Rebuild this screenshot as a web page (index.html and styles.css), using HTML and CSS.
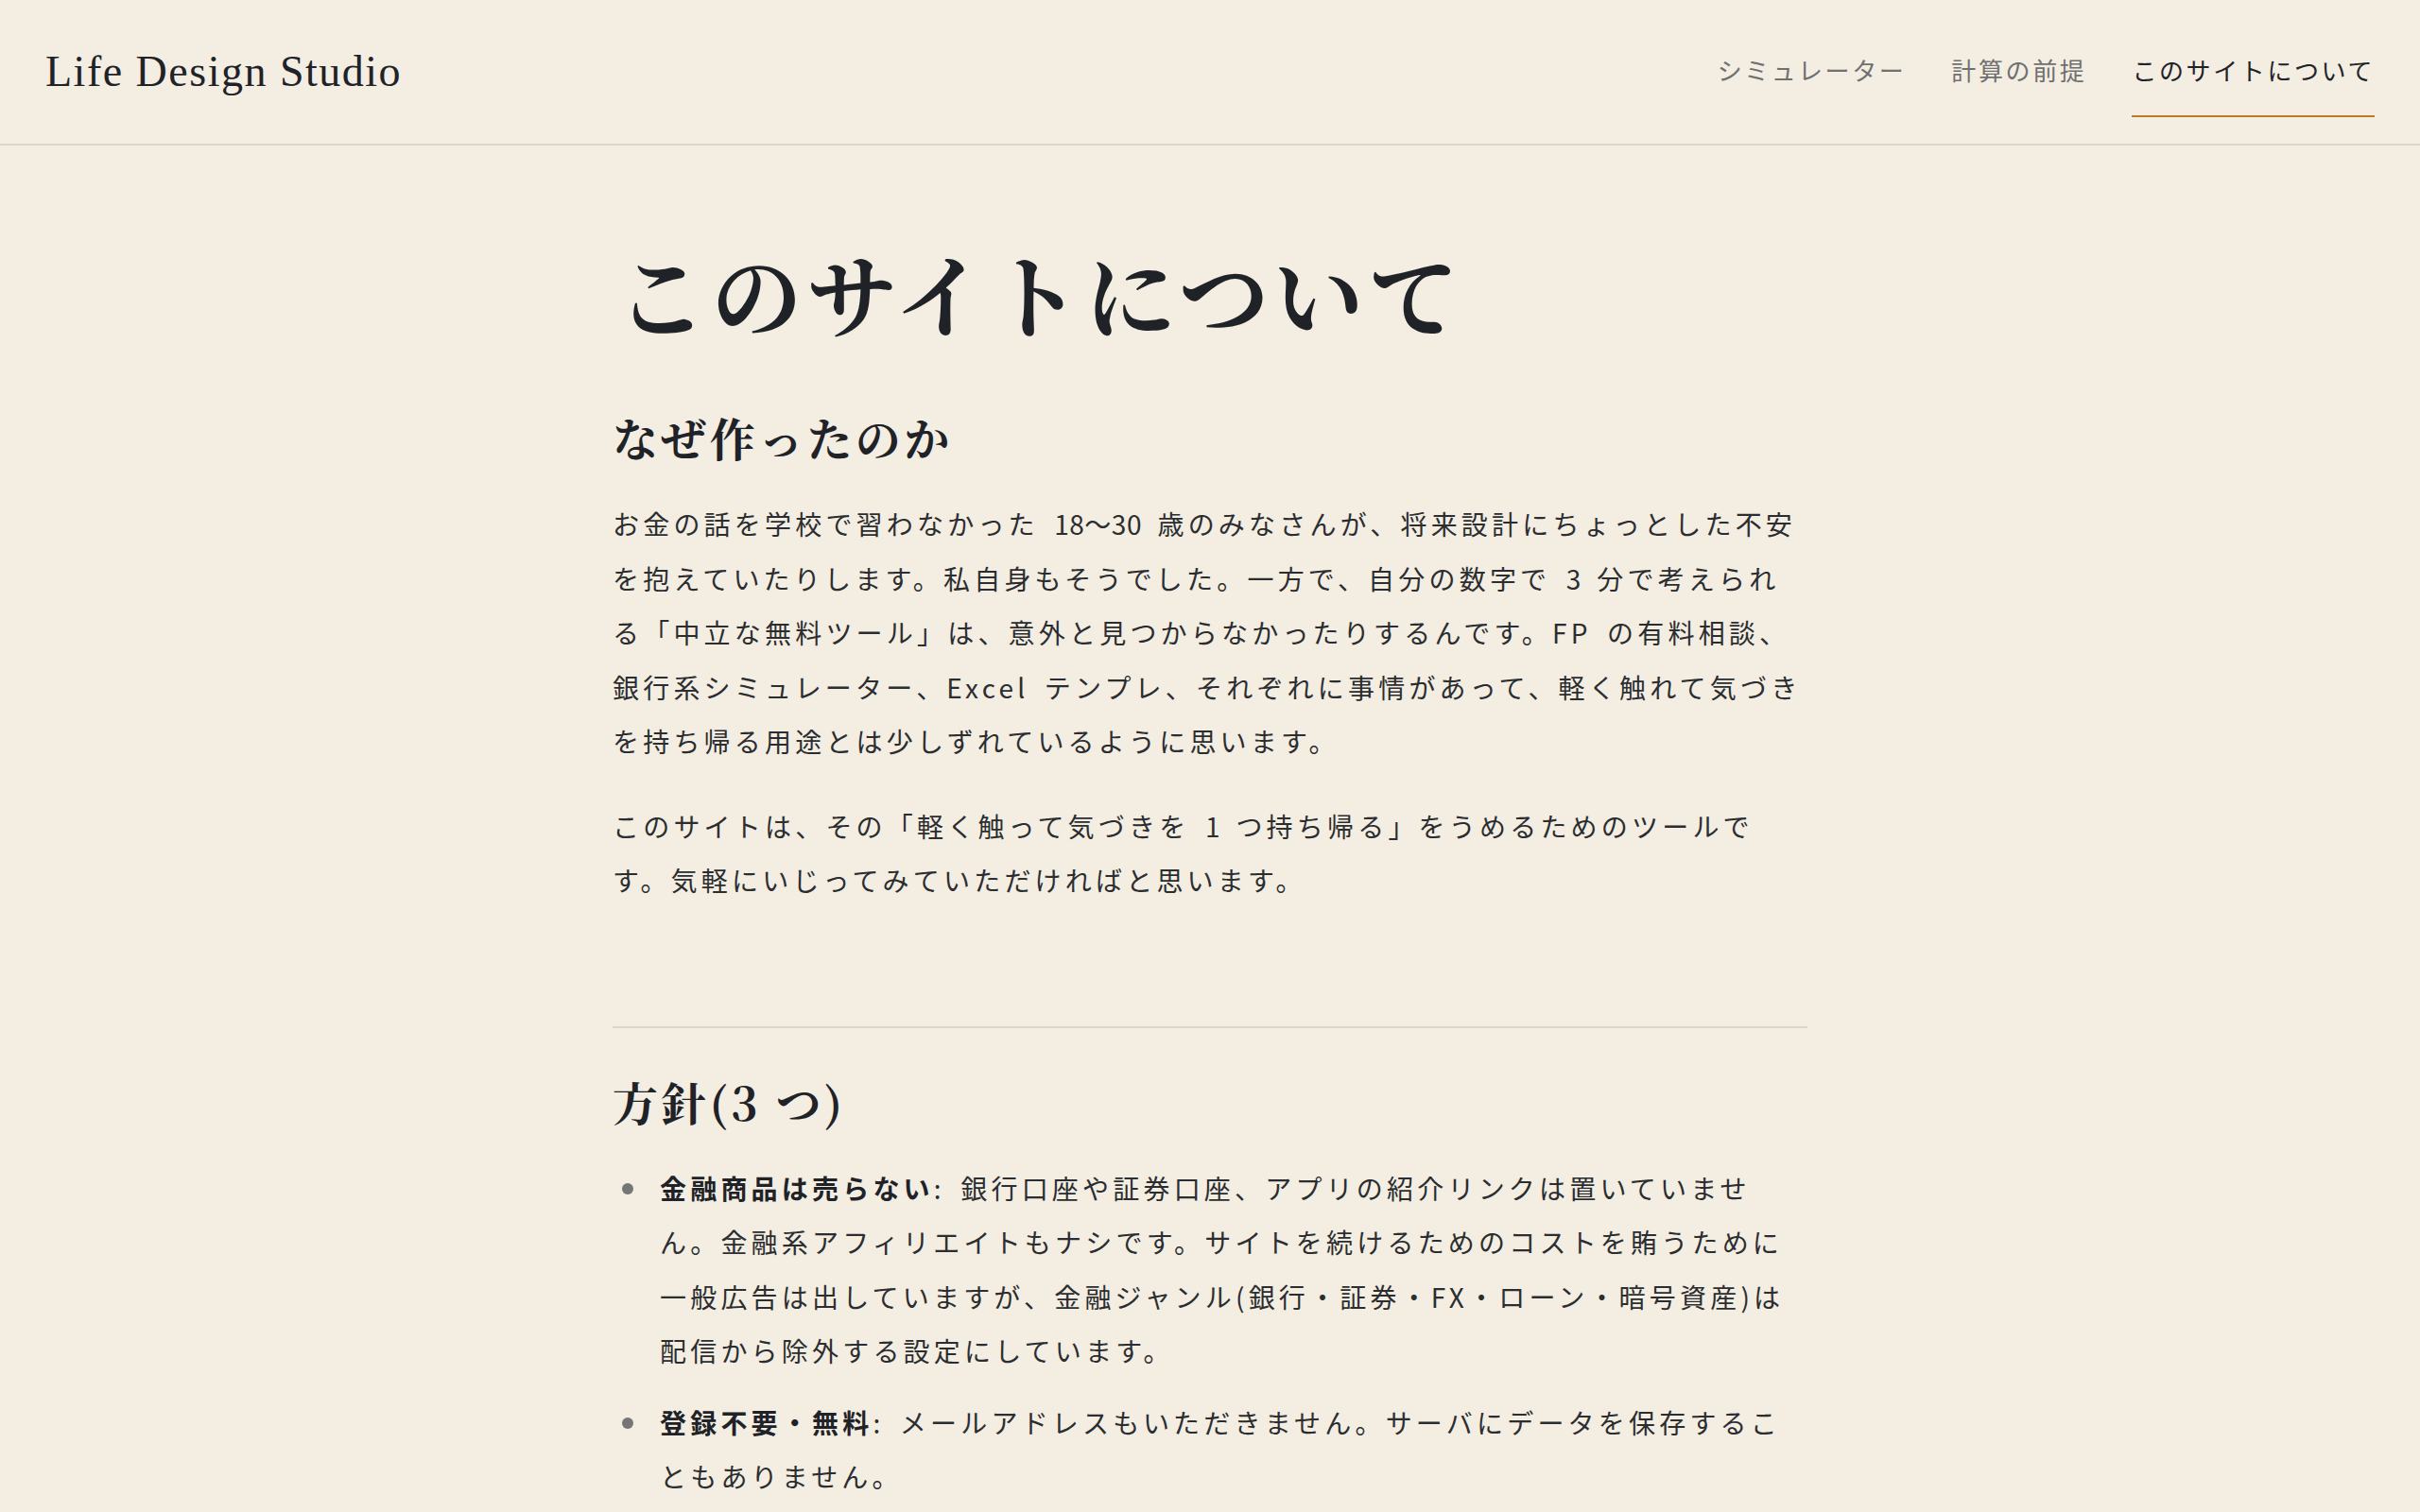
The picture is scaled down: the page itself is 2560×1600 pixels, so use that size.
FILE: index.html
```html
<!DOCTYPE html>
<html lang="ja">
<head>
<meta charset="utf-8">
<title>このサイトについて | Life Design Studio</title>
<link rel="stylesheet" href="styles.css">
</head>
<body>
<header class="site-header">
  <a class="logo" href="#">Life Design Studio</a>
  <nav class="nav">
    <a class="nav-link" href="#">シミュレーター</a>
    <a class="nav-link" href="#">計算の前提</a>
    <a class="nav-link is-active" href="#">このサイトについて</a>
  </nav>
</header>
<main class="content">
  <h1 class="page-title">このサイトについて</h1>
  <section class="block">
    <h2 class="block-title">なぜ作ったのか</h2>
    <p class="text">お金の話を学校で習わなかった <span class="num">18〜30</span> 歳のみなさんが、将来設計にちょっとした不安を抱えていたりします。私自身もそうでした。一方で、自分の数字で <span class="num">3</span> 分で考えられる「中立な無料ツール」は、意外と見つからなかったりするんです。FP の有料相談、銀行系シミュレーター、Excel テンプレ、それぞれに事情があって、軽く触れて気づきを持ち帰る用途とは少しずれているように思います。</p>
    <p class="text">このサイトは、その「軽く触って気づきを <span class="num">1</span> つ持ち帰る」をうめるためのツールです。気軽にいじってみていただければと思います。</p>
  </section>
  <hr class="divider">
  <section class="block">
    <h2 class="block-title">方針(3 つ)</h2>
    <ul class="policy-list">
      <li class="policy-item"><strong class="policy-head">金融商品は売らない</strong>: 銀行口座や証券口座、アプリの紹介リンクは置いていません。金融系アフィリエイトもナシです。サイトを続けるためのコストを賄うために一般広告は出していますが、金融ジャンル(銀行・証券・FX・ローン・暗号資産)は配信から除外する設定にしています。</li>
      <li class="policy-item"><strong class="policy-head">登録不要・無料</strong>: メールアドレスもいただきません。サーバにデータを保存することもありません。</li>
    </ul>
  </section>
</main>
</body>
</html>
```

FILE: styles.css
```css
* {
  box-sizing: border-box;
}

html, body {
  margin: 0;
  padding: 0;
}

body {
  background: #f3ede2;
  color: #2b2d30;
  font-family: "Noto Sans CJK JP", "Noto Sans", sans-serif;
}

a {
  color: inherit;
  text-decoration: none;
}

.site-header {
  display: flex;
  justify-content: space-between;
  align-items: center;
  height: 154px;
  padding: 0 48px;
  border-bottom: 2px solid #dcd7cd;
}

.logo {
  font-family: "Liberation Serif", "Times New Roman", serif;
  font-size: 46px;
  letter-spacing: 1.5px;
  color: #1f2328;
  line-height: 1.107;
}

.nav {
  display: flex;
  gap: 48px;
  align-self: flex-end;
  margin-bottom: 28px;
}

.nav-link {
  display: block;
  font-size: 26px;
  line-height: 39px;
  letter-spacing: 0.1em;
  color: #707070;
  padding-bottom: 29px;
  border-bottom: 2px solid transparent;
}

.nav-link.is-active {
  color: #1f2328;
  border-bottom-color: #c07a22;
}

.content {
  width: 1264px;
  margin: 0 auto;
  padding: 98px 0 120px;
}

.page-title {
  margin: 0 0 65px;
  font-family: "Noto Serif CJK JP", "Noto Serif JP", "Noto Sans CJK JP", serif;
  font-size: 96px;
  line-height: 114px;
  font-weight: 700;
  letter-spacing: 4.5px;
  color: #1f2328;
  padding-left: 4px;
}

.block-title {
  margin: 0 0 31px;
  font-family: "Noto Serif CJK JP", "Noto Serif JP", "Noto Sans CJK JP", serif;
  font-size: 48px;
  line-height: 64px;
  font-weight: 700;
  letter-spacing: 0.07em;
  color: #1f2328;
}

.text {
  margin: 0 0 32px;
  font-size: 28px;
  line-height: 57.5px;
  letter-spacing: 4.2px;
  word-spacing: 6px;
}

.num {
  letter-spacing: 0.5px;
}

.divider {
  border: 0;
  border-top: 2px solid #dcd7cd;
  margin: 125px 0 46px;
}

.policy-list {
  list-style: none;
  margin: 28px 0 0;
  padding: 0;
}

.policy-item {
  position: relative;
  padding-left: 50px;
  font-size: 28px;
  line-height: 57.5px;
  letter-spacing: 4.2px;
  word-spacing: 6px;
  margin-bottom: 18px;
}

.policy-item::before {
  content: "";
  position: absolute;
  left: 10px;
  top: 23px;
  width: 12px;
  height: 12px;
  border-radius: 50%;
  background: #767676;
}

.policy-head {
  font-weight: 700;
  color: #1f2328;
}
```
